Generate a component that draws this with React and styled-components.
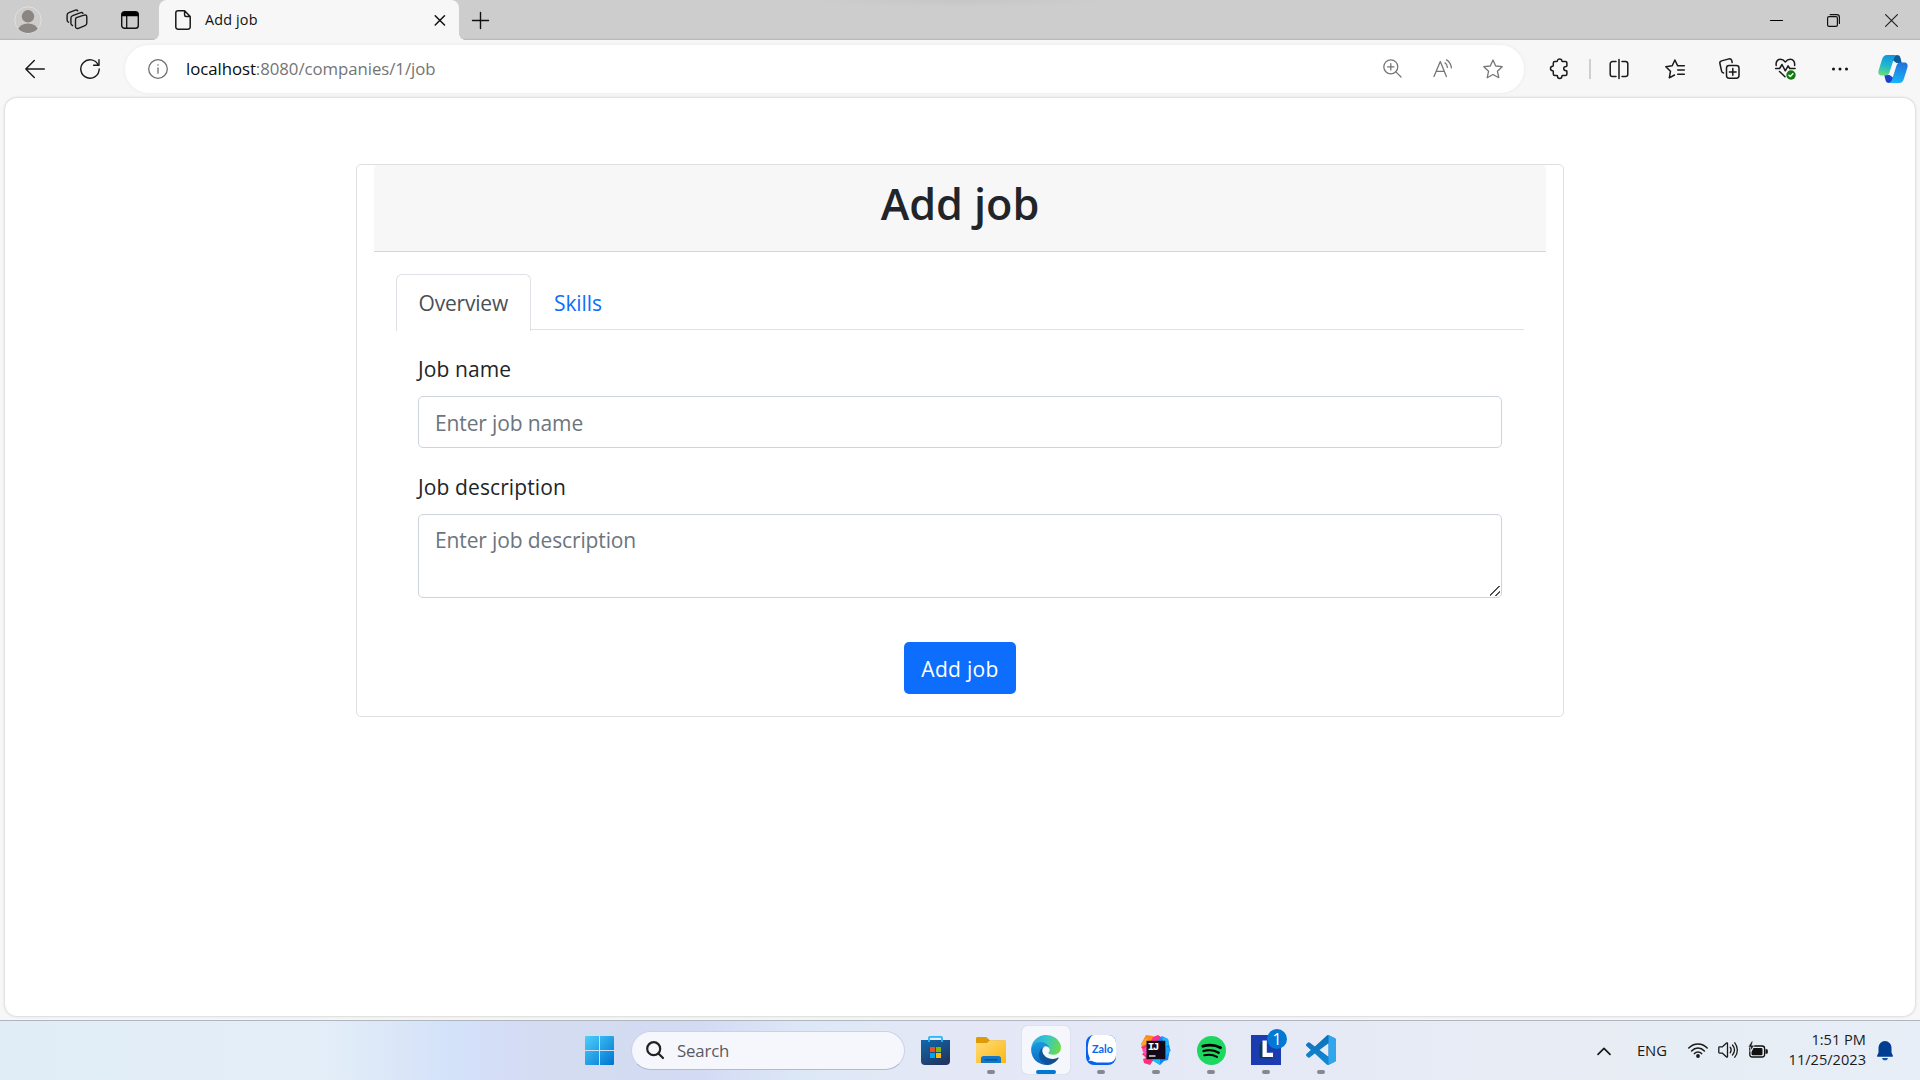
import React from "react";
import styled, { createGlobalStyle } from "styled-components";

const GlobalStyle = createGlobalStyle`
  *, *::before, *::after { box-sizing: border-box; }
  html, body { margin: 0; padding: 0; overflow: hidden; }
  body { font-family: "Open Sans", "Noto Sans", sans-serif; color: #212529; background: #f7f7f7; }
  button, input, textarea { font-family: inherit; margin: 0; }
  svg { display: block; flex: none; overflow: visible; }
`;

const Screen = styled.div`
  width: 1920px;
  height: 1080px;
  display: flex;
  flex-direction: column;
  background: #f7f7f7;
`;

/* ---------- browser chrome ---------- */

const TabStrip = styled.header`
  height: 40px;
  flex: none;
  display: flex;
  background: radial-gradient(ellipse 150px 7px at 50% 0, #c6c6c6 0, rgba(198, 198, 198, 0) 100%), #cdcdcd;
  box-shadow: inset 0 -1px 0 #bababa, inset 0 -2px 0 #c8c8c8;
`;

const StripTools = styled.div`
  width: 159px;
  display: flex;
  align-items: center;
  padding-left: 14px;
`;

const StripSlot = styled.span`
  width: ${(p) => p.$w}px;
  display: flex;
`;

const Tab = styled.div`
  position: relative;
  width: 300px;
  height: 40px;
  display: flex;
  align-items: center;
  padding: 0 13.5px 0 16px;
  border-radius: 8px 8px 0 0;
  background: #f7f7f7;
  &::before, &::after {
    content: "";
    position: absolute;
    bottom: 0;
    width: 6px;
    height: 6px;
  }
  &::before { left: -6px; background: radial-gradient(circle at 0 0, transparent 5.5px, #f7f7f7 6px); }
  &::after { right: -6px; background: radial-gradient(circle at 100% 0, transparent 5.5px, #f7f7f7 6px); }
`;

const TabTitle = styled.span`
  flex: 1;
  margin-left: 14px;
  font-size: 14.4px;
  line-height: 20px;
  letter-spacing: 0.15px;
  color: #111;
`;

const NewTab = styled.span`
  display: flex;
  align-items: center;
  margin-left: 13px;
`;

const WindowControls = styled.div`
  margin-left: auto;
  display: flex;
`;

const WindowButton = styled.span`
  width: 57.5px;
  height: 40px;
  display: flex;
  align-items: center;
  justify-content: center;
`;

const Toolbar = styled.div`
  height: 57px;
  flex: none;
  display: flex;
  align-items: center;
  padding: 0 0 0 7px;
`;

const ToolButton = styled.span`
  width: ${(p) => p.$w || 55}px;
  height: 40px;
  padding-left: ${(p) => p.$inset || 0}px;
  display: flex;
  align-items: center;
  justify-content: center;
`;

const AddressBar = styled.div`
  width: 1399px;
  height: 48px;
  margin-left: 8px;
  display: flex;
  align-items: center;
  border-radius: 24px;
  padding: 0 6px 0 22.5px;
  background: #fff;
  box-shadow: 0 0 4px rgba(0, 0, 0, 0.06);
`;

const Url = styled.span`
  flex: 1;
  margin-left: 18.5px;
  font-size: 16.8px;
  line-height: 24px;
  letter-spacing: -0.05px;
  color: #747474;
  b { font-weight: 400; color: #0b0b0b; }
`;

const Divider = styled.span`
  width: 2px;
  height: 20px;
  background: #cfcfcf;
`;

/* ---------- page ---------- */

const Viewport = styled.main`
  width: 1910px;
  height: 918px;
  margin: 1px auto 0;
  flex: none;
  border-radius: 12px;
  background: #fff;
  box-shadow: 0 0 3px rgba(0, 0, 0, 0.24);
  padding-top: 66px;
`;

const Card = styled.section`
  width: 1208px;
  height: 553px;
  margin: 0 auto;
  padding: 0 17px;
  border: 1px solid #dfdfdf;
  border-radius: 5px;
  background: #fff;
`;

const CardHeader = styled.div`
  height: 87px;
  padding-top: 11px;
  border-bottom: 1px solid #d6d6d6;
  border-radius: 5px 5px 0 0;
  background: #f7f7f7;
`;

const Title = styled.h1`
  margin: 0;
  font-size: 43.2px;
  font-weight: 600;
  line-height: 55px;
  letter-spacing: -0.05px;
  text-align: center;
`;

const CardBody = styled.div`
  padding: 22px 22px 0 21.5px;
`;

const NavTabs = styled.nav`
  display: flex;
  height: 56px;
  border-bottom: 1px solid #dee2e6;
`;

const NavLink = styled.a`
  height: ${(p) => (p.$active ? 57 : 55)}px;
  padding: 12px 22px 0;
  font-size: 21px;
  line-height: 33px;
  letter-spacing: ${(p) => (p.$active ? -0.2 : -0.1)}px;
  border: 1px solid ${(p) => (p.$active ? "#dee2e6" : "transparent")};
  border-bottom: 0;
  border-radius: 6px 6px 0 0;
  background: ${(p) => (p.$active ? "#fff" : "transparent")};
  color: ${(p) => (p.$active ? "#495057" : "#0d6efd")};
`;

const Form = styled.form`
  padding: 22px 22px 0 22.5px;
  display: flex;
  flex-direction: column;
`;

const Label = styled.label`
  height: 44px;
  font-size: 21px;
  line-height: 34px;
  letter-spacing: 0.11px;
`;

const fieldStyle = `
  width: 100%;
  display: block;
  border: 1px solid #ced4da;
  border-radius: 5px;
  background: #fff;
  font-size: 21px;
  line-height: 33px;
  letter-spacing: -0.13px;
  color: #212529;
  outline: none;
  &::placeholder { color: #6c757d; opacity: 1; }
`;

const Input = styled.input`
  ${fieldStyle}
  height: 52px;
  padding: 9px 16px 7px;
  margin-bottom: 22px;
`;

const TextArea = styled.textarea`
  ${fieldStyle}
  height: 84px;
  padding: 9px 16px 7px;
  overflow: hidden;
  resize: vertical;
  &::-webkit-resizer {
    background: linear-gradient(135deg, transparent 6px, #505050 6.2px, #505050 7.2px, transparent 7.4px, transparent 10.4px, #505050 10.6px, #505050 11.6px, transparent 11.8px) 4px 4px / 10px 10px no-repeat;
  }
`;

const SubmitButton = styled.button`
  width: 112px;
  height: 52px;
  margin: 44px auto 0;
  padding: 2px 0 0;
  border: 0;
  border-radius: 5px;
  background: #0d6efd;
  color: #fff;
  font-size: 21px;
  line-height: 33px;
  letter-spacing: 0.3px;
`;

/* ---------- taskbar ---------- */

const Taskbar = styled.footer`
  height: 60px;
  margin-top: auto;
  flex: none;
  display: grid;
  grid-template-columns: 1fr auto 1fr;
  align-items: center;
  border-top: 1px solid #b0b6be;
  background: linear-gradient(90deg, #e0edf6 0, #e3edf8 200px, #e4eef8 320px, #dbe7f8 395px, #d3e2fa 450px, #d5dcf6 510px, #d3dcf0 560px, #d3dbf4 700px, #dde8f7 810px, #e4e8f6 930px, #e6eaf6 1320px, #e8edf4 1600px, #e7eef7 1920px);
`;

const TaskGroup = styled.div`
  grid-column: 2;
  height: 48px;
  margin-bottom: 1px;
  display: flex;
  align-items: center;
  gap: 7px;
`;

const TaskItem = styled.span`
  position: relative;
  width: 48px;
  height: 48px;
  display: flex;
  align-items: center;
  justify-content: center;
  border-radius: 5px;
  background: ${(p) => (p.$active ? "#f5f7fc" : "transparent")};
  box-shadow: ${(p) => (p.$active ? "0 0 1px rgba(60, 70, 110, 0.35)" : "none")};
  &::after {
    content: "";
    display: ${(p) => (p.$running ? "block" : "none")};
    position: absolute;
    bottom: 0;
    left: 50%;
    width: ${(p) => (p.$active ? 20 : 8)}px;
    height: 4px;
    transform: translateX(-50%);
    border-radius: 2px;
    background: ${(p) => (p.$active ? "#0078d4" : "#868890")};
  }
`;

const SearchBox = styled.div`
  width: 274px;
  height: 39px;
  margin-left: 1px;
  display: flex;
  align-items: center;
  padding-left: 14px;
  border: 1px solid #ccd2e6;
  border-bottom-color: #b4b9cd;
  border-radius: 20px;
  background: #f5f7fd;
  font-size: 16.8px;
  letter-spacing: -0.15px;
  color: #595a60;
  svg { margin-right: 13px; }
`;

const Badge = styled.span`
  position: absolute;
  top: 3px;
  right: 3px;
  width: 20px;
  height: 20px;
  border-radius: 50%;
  background: #0078d4;
  color: #fff;
  font-size: 16px;
  line-height: 20px;
  text-align: center;
`;

const Tray = styled.div`
  display: flex;
  align-items: center;
  justify-content: flex-end;
  padding-right: 27px;
  height: 59px;
  color: #1b1b1b;
`;

const Language = styled.span`
  margin: 0 21px 0 26px;
  font-size: 14.8px;
  line-height: 18px;
  padding-bottom: 1px;
`;

const TrayIcons = styled.span`
  display: flex;
  align-items: center;
  gap: 10px;
  padding-bottom: 1px;
`;

const Clock = styled.span`
  width: 98px;
  margin-right: 11px;
  padding-bottom: 4px;
  display: flex;
  flex-direction: column;
  align-items: flex-end;
  font-size: 14.6px;
  line-height: 20px;
  white-space: nowrap;
`;

/* ---------- icons ---------- */

const Stroke = ({ w = 20, h = w, c = "#1a1a1a", s = 1.4, children }) => (
  <svg width={w} height={h} viewBox={`0 0 ${w} ${h}`} fill="none" stroke={c} strokeWidth={s} strokeLinecap="round" strokeLinejoin="round">
    {children}
  </svg>
);

const Avatar = () => (
  <svg width="28" height="28" viewBox="0 0 28 28">
    <defs><clipPath id="av"><circle cx="14" cy="14" r="13" /></clipPath></defs>
    <circle cx="14" cy="14" r="13.2" fill="#cfcdcb" stroke="#e2e0dd" strokeWidth="1" />
    <circle cx="14" cy="10.3" r="6.2" fill="#8b8681" />
    <ellipse cx="14" cy="24.5" rx="10" ry="7" fill="#8b8681" clipPath="url(#av)" />
  </svg>
);

const Workspaces = () => (
  <Stroke w={22} s={1.4}>
    <path d="M10.4 8.6 18 6.1c1.5-.5 2.8.2 2.8 1.8v6.2c0 1.3-.6 2.2-1.8 2.6l-6.6 2.6c-1.6.6-2.9-.2-2.9-1.8v-6.4c0-1.3.5-2.1.9-2.5z" />
    <path d="M6.5 16.5c-1-.3-1.6-1-1.6-2.2V9.2c0-1.4.6-2.2 1.8-2.6l8-2.9c.9-.3 1.7-.1 2.2.5" />
    <path d="M2.5 13.2C1.6 12.9 1.1 12.2 1.1 11V6.2c0-1.4.6-2.2 1.8-2.6L9.5 1.2c1-.3 1.7-.1 2.2.5" />
  </Stroke>
);

const VerticalTabs = () => (
  <svg width="18" height="18" viewBox="0 0 18 18">
    <rect x=".7" y=".7" width="16.6" height="16.6" rx="2.8" fill="none" stroke="#111" strokeWidth="1.4" />
    <path d="M.7 5.3V3.5A2.8 2.8 0 0 1 3.5.7h11a2.8 2.8 0 0 1 2.8 2.8v1.8z" fill="#000" />
    <path d="M5.7 5v12" stroke="#111" strokeWidth="1.3" />
  </svg>
);

const PageIcon = () => (
  <Stroke w={16} h={20} s={1.5}>
    <path d="M9.6.8H3A2.2 2.2 0 0 0 .8 3v14A2.2 2.2 0 0 0 3 19.2h10a2.2 2.2 0 0 0 2.2-2.2V6.5z M9.6.8v4.2c0 1 .5 1.5 1.5 1.5h4.1" />
  </Stroke>
);

const Info = () => (
  <Stroke c="#6f6f6f" s={1.3}>
    <circle cx="10" cy="10" r="9.3" />
    <path d="M10 9v5.2" />
    <circle cx="10" cy="6" r=".8" fill="#6f6f6f" stroke="none" />
  </Stroke>
);

const ZoomIn = () => (
  <Stroke w={19} c="#767676" s={1.3}>
    <circle cx="7.8" cy="7.8" r="7" /><path d="M12.9 12.9 18 18M7.8 4.6V11M4.6 7.8H11" />
  </Stroke>
);

const ReadAloud = () => (
  <Stroke c="#767676" s={1.3}>
    <path d="M1 17.5 7.3 2.5 13.4 17.5M3.2 12.4h8.1" />
    <path d="M12 3.9c1.5.9 2.3 2.5 2.4 4.500M13.500.9c2.800 1.600 4.500 4.400 4.900 8" />
  </Stroke>
);

const starPath = "M10 1 12.7 7 19.2 7.7 14.4 12.2 15.8 18.7 10 15.5 4.2 18.7 5.6 12.2.8 7.7 7.3 7z";

const Puzzle = () => (
  <Stroke w={20} h={21} s={1.5}>
    <path d="M5.8 3.6h1.7c.5 0 .8-.2.8-.6A2.2 2.2 0 0 1 10.7 1a2.2 2.2 0 0 1 2.2 2c0 .4.3.6.8.6h2.7c.9 0 1.5.6 1.5 1.5v2.7c0 .4-.3.6-.7.6-1.5 0-2.5 1-2.5 2.2s1 2.2 2.5 2.2c.4 0 .7.3.7.7v2.6c0 .9-.6 1.5-1.5 1.5h-2.7c-.4 0-.8.3-.8.7a2.2 2.2 0 0 1-4.4 0c0-.4-.4-.7-.8-.7H5.8c-.9 0-1.5-.6-1.5-1.5v-2.7c0-.4-.2-.6-.6-.7A2.2 2.2 0 0 1 1.5 10.5c0-1.2.9-2.1 2.2-2.2.4 0 .6-.3.6-.7V5.1c0-.9.6-1.5 1.5-1.5z" />
  </Stroke>
);

const SplitScreen = () => (
  <Stroke w={20} s={1.5}>
    <path d="M7 2.5H3.5a2.3 2.3 0 0 0-2.3 2.3v10.4a2.3 2.3 0 0 0 2.3 2.3H7M13 2.5h3.5a2.3 2.3 0 0 1 2.3 2.3v10.4a2.3 2.3 0 0 1-2.3 2.3H13M10 .4v19.2" />
  </Stroke>
);

const Favorites = () => (
  <Stroke w={20} s={1.5}>
    <path d="M12.7 6.8 9.9 1 7.2 6.8.8 7.7 5.5 12.2 4.3 18.8 9.5 16M12.7 6.8H19.3M12.7 11h6.6M12.7 15.2h6.6" />
  </Stroke>
);

const Collections = () => (
  <Stroke w={21} s={1.5}>
    <rect x="7.5" y="7.5" width="12.5" height="12.7" rx="2.6" />
    <path d="M13.8 10.5v6.7M10.4 13.9h6.7M4.6 14.9c-1-.1-1.7-.7-2-1.7L.9 5.5C.6 4.2 1.2 3.2 2.5 2.9L10 .9c1.3-.3 2.3.3 2.7 1.6l.5 2" />
  </Stroke>
);

const HeartPulse = () => (
  <Stroke w={21} s={1.5}>
    <path d="M1.2 7.5C.6 3.8 2.5 1.3 5.3 1.3c2 0 3.6.9 5 2.7 1.5-1.8 3-2.7 5-2.7 2.9 0 4.8 2.5 4.3 6.2" />
    <path d="M.6 10.5h4L7 6.5l3.3 6.3 2.8-5 1.7 2.7h5.3M4.5 13.5l5.5 5.3" />
    <circle cx="16" cy="17" r="4.7" fill="#107c10" stroke="none" />
    <path d="m14 17.2 1.3 1.3 2.6-2.7" stroke="#fff" />
  </Stroke>
);

const Copilot = () => (
  <svg width="30" height="28" viewBox="0 0 30 28">
    <defs>
      <linearGradient id="cpA" x1=".5" y1="0" x2=".3" y2="1"><stop offset="0" stopColor="#1096de" /><stop offset=".5" stopColor="#1fb7cf" /><stop offset="1" stopColor="#66dd7c" /></linearGradient>
      <linearGradient id="cpB" x1=".6" y1="0" x2=".4" y2="1"><stop offset="0" stopColor="#2372dc" /><stop offset="1" stopColor="#16b4f8" /></linearGradient>
    </defs>
    <path d="M18.5 0c2.9 0 3.5 1.3 4 3l1.2 5h-5.2L13 4z" fill="#0b5c9c" />
    <path d="M11.5 28c-2.9 0-3.5-1.3-4-3l-1.2-5h5.2L17 24z" fill="#1b3fcf" />
    <path d="M9 0h10c-1.8.4-2.5 1.7-3.2 4l-4 12.5c-.8 2.5-1.8 4-4.3 4H4C1 20.5-.2 18.5.6 15.5L4 4.5C4.9 1.5 6.5 0 9 0z" fill="url(#cpA)" />
    <path d="M21 28H11c1.8-.4 2.5-1.7 3.2-4l4-12.5c.8-2.5 1.8-4 4.3-4H26c3 0 4.2 2 3.4 5L26 23.5C25.1 26.5 23.5 28 21 28z" fill="url(#cpB)" />
  </svg>
);

const StartLogo = () => (
  <svg width="29" height="29" viewBox="0 0 29 29">
    <defs><linearGradient id="win" gradientUnits="userSpaceOnUse" x1="0" y1="0" x2="29" y2="29"><stop offset="0" stopColor="#4cd0fb" /><stop offset="1" stopColor="#0072d0" /></linearGradient></defs>
    <path fill="url(#win)" d="M1 0h13v14H0V1a1 1 0 0 1 1-1zM15 0h13a1 1 0 0 1 1 1v13H15zM0 15h14v14H1a1 1 0 0 1-1-1zM15 15h14v13a1 1 0 0 1-1 1H15z" />
  </svg>
);

const Store = () => (
  <svg width="30" height="29" viewBox="0 0 30 29">
    <defs><linearGradient id="st" x1="0" y1="0" x2=".6" y2="1"><stop offset="0" stopColor="#0f69ae" /><stop offset="1" stopColor="#213763" /></linearGradient></defs>
    <path d="M0 4h29v21a4 4 0 0 1-4 4H4a4 4 0 0 1-4-4z" fill="url(#st)" />
    <path d="M8 6V1.8C8 1.2 8.4.9 9 .9h11c.6 0 1 .3 1 .9V6" fill="none" stroke="#22b8f3" strokeWidth="1.8" />
    <path d="M9 11h5v5H9z" fill="#f25022" /><path d="M15 11h5v5h-5z" fill="#7fba00" />
    <path d="M9 17h5v5H9z" fill="#00a4ef" /><path d="M15 17h5v5h-5z" fill="#ffb900" />
  </svg>
);

const Explorer = () => (
  <svg width="30" height="27" viewBox="0 0 30 27">
    <defs><linearGradient id="fo" x1="0" y1="0" x2="1" y2="1"><stop offset="0" stopColor="#ffdc78" /><stop offset="1" stopColor="#fbb811" /></linearGradient></defs>
    <path d="M0 1.5C0 .6.6 0 1.5 0h7.8c1 0 1.5.3 2.2 1l2.5 2.5H28.5c1 0 1.5.5 1.5 1.5v6H0z" fill="#dd9c07" />
    <path d="M0 6h10c1 0 1.5-.3 2.2-1l1.8-1.5H30V26H0z" fill="url(#fo)" />
    <path d="M5 26v-4.5C5 20 6 19 7.5 19h15c1.5 0 2.5 1 2.5 2.5V26z" fill="#1577c8" />
    <path d="M8.5 22.8h13" stroke="#084f8c" strokeWidth="1.3" />
  </svg>
);

const Edge = () => (
  <svg width="30" height="30" viewBox="4.63 4.92 256 258">
    <defs>
      <linearGradient id="eg1" x1="0" y1=".35" x2="1" y2=".6"><stop offset="0" stopColor="#2ba8e2" /><stop offset=".45" stopColor="#34c6cc" /><stop offset="1" stopColor="#6ddc45" /></linearGradient>
      <linearGradient id="eg2" x1=".4" y1="0" x2=".5" y2="1"><stop offset="0" stopColor="#1b9de2" /><stop offset="1" stopColor="#0d66be" /></linearGradient>
      <linearGradient id="eg3" x1="0" y1=".5" x2="1" y2=".5"><stop offset="0" stopColor="#0c5aa6" /><stop offset="1" stopColor="#114a8b" /></linearGradient>
    </defs>
    <path d="M235.68 199.19a93.73 93.73 0 0 1-10.54 4.71 101.87 101.87 0 0 1-35.9 6.46c-47.32 0-88.54-32.55-88.54-74.32A31.48 31.48 0 0 1 117.13 108.75c-42.8 1.8-53.8 46.4-53.8 72.53 0 73.88 68.09 81.37 82.76 81.37 7.91 0 19.84-2.3 27-4.56l1.31-.44a128.34 128.34 0 0 0 66.6-52.8 4 4 0 0 0-5.32-5.66z" fill="url(#eg3)" />
    <path d="M110.34 246.34A79.2 79.2 0 0 1 87.6 225a80.72 80.72 0 0 1 29.53-120.25c3.12-1.47 8.45-4.13 15.54-4a32.35 32.35 0 0 1 25.69 13 31.88 31.88 0 0 1 6.36 18.66c0-.21 24.46-79.6-80-79.6-43.9 0-80 41.66-80 78.21a130.15 130.15 0 0 0 12.11 56 128 128 0 0 0 156.38 67.11 75.55 75.55 0 0 1-62.78-8z" fill="url(#eg2)" />
    <path d="M156.94 153.78c-.81 1.05-3.3 2.5-3.3 5.66 0 2.61 1.7 5.12 4.72 7.23 14.38 10 41.49 8.68 41.56 8.68a59.56 59.56 0 0 0 30.27-8.35 61.38 61.38 0 0 0 30.43-52.88c.26-22.41-8-37.31-11.34-43.91C228.09 28.76 182.35 4.92 132.63 4.92a128 128 0 0 0-128 126.2c.48-36.54 36.8-66.05 80-66.05 3.5 0 23.46.34 42 10.07 16.34 8.58 24.9 18.94 30.85 29.21 6.18 10.67 7.28 24.15 7.28 29.52s-2.74 13.33-7.82 19.91z" fill="url(#eg1)" />
  </svg>
);

const ZaloText = styled.text`
  font: 700 10.5px Lato, sans-serif;
  fill: #0a66ee;
`;

const Zalo = () => (
  <svg width="30" height="30" viewBox="0 0 30 30">
    <path d="M8 0h14a8 8 0 0 1 8 8v14a8 8 0 0 1-8 8H8a8 8 0 0 1-8-8V8a8 8 0 0 1 8-8z" fill="#0861ec" />
    <path d="M8 0h14a8 8 0 0 1 8 8v12.500a7 7 0 0 1-7 7h-10.500c-2.500 0-5-.6-7-1.800L2.500 26c1.300-1.200 1.700-2.500.9-4C1 17.500 1.300 7 4.500 2.500 5.300 1 6.500 0 8 0z" fill="#fff" />
    <ZaloText x="16.5" y="17.5" textAnchor="middle" textLength="21" lengthAdjust="spacingAndGlyphs">Zalo</ZaloText>
  </svg>
);

const MonoText = styled.text`
  font: 700 11px "Liberation Mono", monospace;
  fill: #fff;
`;

const IntelliJ = () => (
  <svg width="30" height="30" viewBox="0 0 30 30">
    <path d="M0 9 5 0l7 1 4 6-8 8-6 0z" fill="#fc8c1d" />
    <path d="M0 9 5 3l5 5-6 8z" fill="#ffa42a" />
    <path d="M12 2l5-2 6 4-2 4H9z" fill="#fe2d90" />
    <path d="M0 12l6-3 8 14-5 7-6-2-1-4 3-1-4-4 3-2z" fill="#ff2f7c" />
    <path d="M1 15l7-5v9l-4 1z" fill="#fe4fb0" />
    <path d="M17 6l4-5 6 3 2 10-2 11-4 1-4 4-8-5z" fill="#0f86fb" />
    <path d="M21 2l6 2 1 6-5 2z" fill="#22b4f6" />
    <path d="M25 11l5 4-5 6z" fill="#1aa6f5" />
    <path d="M11 23l8 1 0 6-8-5z" fill="#14c0f2" />
    <path d="M5.5 5.8h18.8v18.4H5.5z" fill="#120a18" />
    <MonoText x="6.8" y="15" textLength="11.5">IJ</MonoText>
    <path d="M8 21h6.5" stroke="#fff" strokeWidth="1.3" />
  </svg>
);

const Spotify = () => (
  <svg width="29" height="29" viewBox="0 0 29 29">
    <circle cx="14.5" cy="14.5" r="14.5" fill="#1ed760" />
    <g fill="none" stroke="#000" strokeLinecap="round">
      <path d="M5.8 10.2c6-1.8 13-1.1 17.8 1.5" strokeWidth="2.8" />
      <path d="M6.5 15c5-1.4 11-.8 15.2 1.7" strokeWidth="2.3" />
      <path d="M7.2 19.3c4.5-1 9-.6 12.8 1.6" strokeWidth="1.9" />
    </g>
  </svg>
);

const LApp = () => (
  <svg width="30" height="30" viewBox="0 0 30 30">
    <path d="M0 0h30v30H0z" fill="#1b3cb0" /><path d="M11.5 6 8.5 10v13l12 .5 1-3-10-1z" fill="#0d3a55" />
    <path d="M11.5 5.5h4.3v12.3H22v4.2H11.5z" fill="#fff" />
  </svg>
);

const codeMark = "M70.9 99.3a6.2 6.2 0 0 0 5-.2l20.5-9.9A6.25 6.25 0 0 0 100 83.6V16.4a6.25 6.25 0 0 0-3.5-5.6L75.9.9a6.2 6.2 0 0 0-7.1 1.2L29.4 38 12.2 25a4.2 4.2 0 0 0-5.3.2L1.4 30.2a4.2 4.2 0 0 0 0 6.2L16.2 50 1.4 63.6a4.2 4.2 0 0 0 0 6.2l5.5 5a4.2 4.2 0 0 0 5.3.2l17.2-13 39.4 36a6.2 6.2 0 0 0 2.1 1.3zM75 27.3 45.1 50 75 72.7z";

const VSCode = () => (
  <svg width="30" height="30" viewBox="0 0 100 100">
    <defs>
      <linearGradient id="vs" x1="0" y1="0" x2="0" y2="1"><stop offset="0" stopColor="#0a6fb8" /><stop offset="1" stopColor="#1689d4" /></linearGradient>
      <clipPath id="vsSlab"><path d="M75 0h25v100H75z" /></clipPath>
    </defs>
    <path fillRule="evenodd" d={codeMark} fill="url(#vs)" />
    <path fillRule="evenodd" d={codeMark} fill="#2fa6ee" clipPath="url(#vsSlab)" />
  </svg>
);

const Wifi = () => (
  <Stroke w={20} h={16} s={1.5}>
    <path d="M.8 6c5-5.4 13.4-5.4 18.4 0M3.6 8.9c3.6-3.9 9.2-3.9 12.8 0M6.4 11.6c2.1-2.2 5.1-2.2 7.2 0" />
    <circle cx="10" cy="14" r="1.9" fill="#1a1a1a" stroke="none" />
  </Stroke>
);

const Volume = () => (
  <Stroke w={20} h={18} s={1.3}>
    <path d="M.8 6.7c0-.5.3-.8.8-.8h2.6l4.3-3.8c.5-.4 1-.2 1 .5v12.8c0 .7-.5.9-1 .5l-4.3-3.8H1.6c-.5 0-.8-.3-.8-.8z" />
    <path d="M12.2 6.2c1.2 1.7 1.2 3.9 0 5.6M14.5 4c2.4 3 2.4 7 0 10M16.8 1.8c3.4 4.3 3.4 10.1 0 14.4" />
  </Stroke>
);

const Battery = () => (
  <svg width="20" height="18" viewBox="0 0 20 18">
    <rect x="1.8" y="5" width="14.8" height="11" rx="2.5" fill="none" stroke="#111" strokeWidth="1.3" />
    <path d="M5.5 7h7.8a1.2 1.2 0 0 1 1.2 1.2V13a1.2 1.2 0 0 1-1.2 1.2H4.6A1.2 1.2 0 0 1 3.5 13v-2zM17.5 8.2h1c.8 0 1.3.5 1.3 1.3v2c0 .8-.5 1.3-1.3 1.3h-1z" fill="#111" />
    <path d="M3.8 0 .2 6h2.6L2 10.5 6.3 4.6H3.7L5 0z" fill="#111" stroke="#e8edf4" strokeWidth=".6" />
  </svg>
);

const Bell = () => (
  <svg width="16" height="20" viewBox="0 0 16 20">
    <path d="M8 0a6.5 6.5 0 0 1 6.5 6.5v5l1.4 3.2c.2.6-.1 1.1-.8 1.1H.9c-.7 0-1-.5-.8-1.1l1.4-3.2v-5A6.5 6.5 0 0 1 8 0z" fill="#003e92" />
    <path d="M5.2 17h5.6a2.8 2.3 0 0 1-5.6 0z" fill="#1256a8" />
  </svg>
);

const tasks = [
  { id: "store", icon: <Store /> },
  { id: "explorer", icon: <Explorer />, running: true },
  { id: "edge", icon: <Edge />, running: true, active: true },
  { id: "zalo", icon: <Zalo />, running: true },
  { id: "intellij", icon: <IntelliJ />, running: true },
  { id: "spotify", icon: <Spotify />, running: true },
  { id: "lapp", icon: <LApp />, running: true, badge: 1 },
  { id: "vscode", icon: <VSCode />, running: true },
];

export default function App() {
  return (
    <Screen>
      <GlobalStyle />
      <TabStrip>
        <StripTools>
          <StripSlot $w={52}><Avatar /></StripSlot>
          <StripSlot $w={55}><Workspaces /></StripSlot>
          <StripSlot $w={18}><VerticalTabs /></StripSlot>
        </StripTools>
        <Tab>
          <PageIcon />
          <TabTitle>Add job</TabTitle>
          <Stroke w={12} s={1.5} c="#111"><path d="M1.2 1.7 10.5 11M10.5 1.7 1.2 11" /></Stroke>
        </Tab>
        <NewTab><Stroke w={17} s={1.4} c="#111"><path d="M8.5.5v16M.5 8.5h16" /></Stroke></NewTab>
        <WindowControls>
          <WindowButton><Stroke w={13} s={1.2} c="#000"><path d="M.5 6.5h12" /></Stroke></WindowButton>
          <WindowButton><Stroke w={13} s={1.2} c="#111"><rect x=".6" y="2.6" width="9.8" height="9.8" rx="1.4" /><path d="M3.2.6h6.6a2.6 2.6 0 0 1 2.6 2.6v6.3" /></Stroke></WindowButton>
          <WindowButton><Stroke w={13} s={1.2} c="#222"><path d="m.6.6 11.8 11.8M12.4.6.6 12.4" /></Stroke></WindowButton>
        </WindowControls>
      </TabStrip>

      <Toolbar>
        <ToolButton><Stroke><path d="M19.3 10H1M9.3 1.4.8 10l8.5 8.6" /></Stroke></ToolButton>
        <ToolButton><Stroke><path d="M18.3 6A9.2 9.2 0 1 0 19.2 10M19 .8V6.2H13.6" /></Stroke></ToolButton>
        <AddressBar>
          <Info />
          <Url><b>localhost</b>:8080/companies/1/job</Url>
          <ToolButton $w={51}><ZoomIn /></ToolButton>
          <ToolButton $w={50}><ReadAloud /></ToolButton>
          <ToolButton $w={50}><Stroke c="#767676" s={1.3}><path d={starPath} /></Stroke></ToolButton>
        </AddressBar>
        <ToolButton $w={65} $inset={5}><Puzzle /></ToolButton>
        <Divider />
        <ToolButton $w={56}><SplitScreen /></ToolButton>
        <ToolButton><Favorites /></ToolButton>
        <ToolButton><Collections /></ToolButton>
        <ToolButton $inset={1}><HeartPulse /></ToolButton>
        <ToolButton><svg width="18" height="4" viewBox="0 0 18 4" fill="#111"><circle cx="2.5" cy="2" r="1.5" /><circle cx="9" cy="2" r="1.5" /><circle cx="15.5" cy="2" r="1.5" /></svg></ToolButton>
        <ToolButton $w={52}><Copilot /></ToolButton>
      </Toolbar>

      <Viewport>
        <Card>
          <CardHeader><Title>Add job</Title></CardHeader>
          <CardBody>
            <NavTabs>
              <NavLink $active>Overview</NavLink>
              <NavLink>Skills</NavLink>
            </NavTabs>
            <Form>
              <Label htmlFor="name">Job name</Label>
              <Input id="name" placeholder="Enter job name" />
              <Label htmlFor="description">Job description</Label>
              <TextArea id="description" placeholder="Enter job description" />
              <SubmitButton type="button">Add job</SubmitButton>
            </Form>
          </CardBody>
        </Card>
      </Viewport>

      <Taskbar>
        <TaskGroup>
          <TaskItem><StartLogo /></TaskItem>
          <SearchBox>
            <Stroke w={18} s={2.2} c="#222"><circle cx="7.7" cy="7.7" r="6.5" /><path d="m12.5 12.5 4.5 4.5" /></Stroke>
            Search
          </SearchBox>
          {tasks.map((t) => (
            <TaskItem key={t.id} $running={t.running} $active={t.active}>
              {t.icon}
              {t.badge && <Badge>{t.badge}</Badge>}
            </TaskItem>
          ))}
        </TaskGroup>
        <Tray>
          <Stroke w={14} h={8} s={1.7}><path d="M1 7.3 7 1.3l6 6" /></Stroke>
          <Language>ENG</Language>
          <TrayIcons><Wifi /><Volume /><Battery /></TrayIcons>
          <Clock><span>1:51 PM</span><span>11/25/2023</span></Clock>
          <Bell />
        </Tray>
      </Taskbar>
    </Screen>
  );
}
